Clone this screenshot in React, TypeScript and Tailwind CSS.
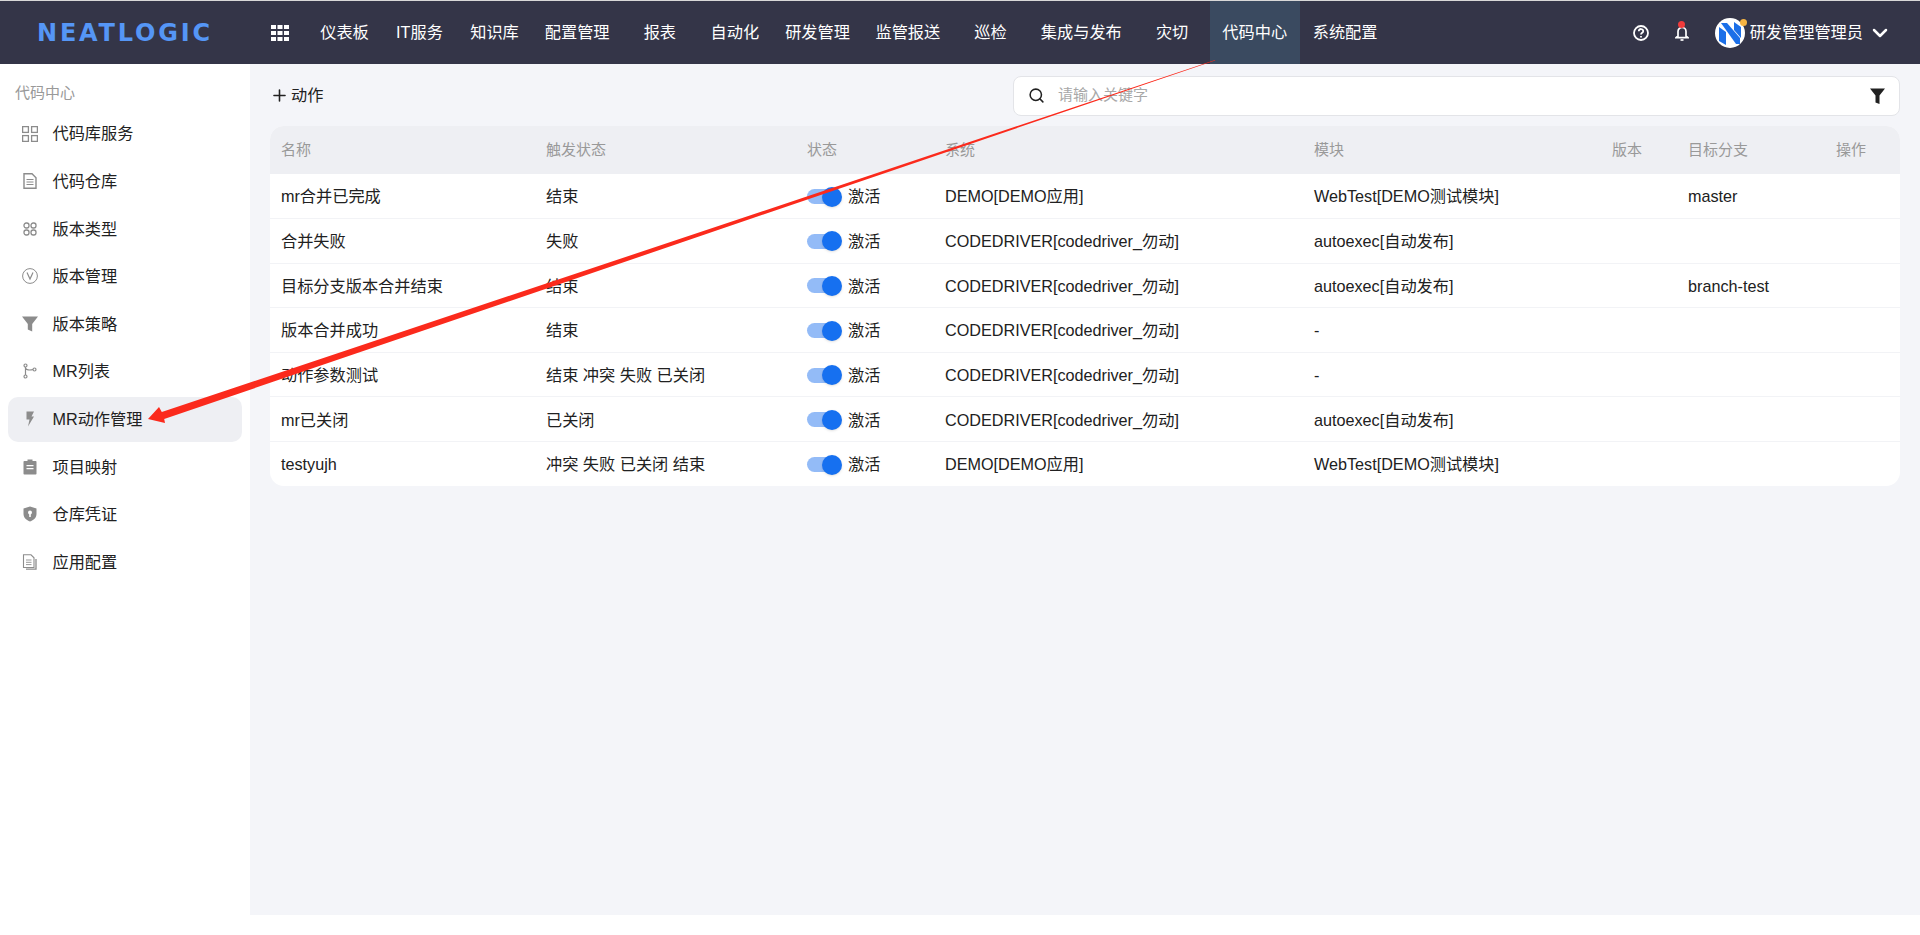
import React from 'react';
import { ChevronDown, Plus, Search } from 'lucide-react';

const navItems = ['仪表板', 'IT服务', '知识库', '配置管理', '报表', '自动化', '研发管理', '监管报送', '巡检', '集成与发布', '灾切', '代码中心', '系统配置'];

const iconProps = { width: 16, height: 16, viewBox: '0 0 16 16', className: 'shrink-0 text-[#8c8c8c]' };

const GridIcon = () => (
  <svg {...iconProps} fill="none" stroke="currentColor" strokeWidth="1.3">
    <rect x="0.6" y="0.6" width="5.8" height="5.8" />
    <rect x="9.6" y="0.6" width="5.8" height="5.8" />
    <rect x="0.6" y="9.6" width="5.8" height="5.8" />
    <rect x="9.6" y="9.6" width="5.8" height="5.8" />
  </svg>
);

const DocIcon = () => (
  <svg {...iconProps} fill="none" stroke="currentColor" strokeWidth="1.4">
    <path d="M2 0.8h8l4 4V15.2H2z" />
    <path d="M4.5 6.5h7M4.5 9h7M4.5 11.5h7" strokeWidth="1" />
  </svg>
);

const BlocksIcon = () => (
  <svg {...iconProps} fill="none" stroke="currentColor" strokeWidth="1.3">
    <rect x="2" y="2" width="5" height="5" rx="2.2" />
    <rect x="9" y="2" width="5" height="5" rx="2.2" />
    <rect x="2" y="9" width="5" height="5" rx="2.2" />
    <rect x="9" y="9" width="5" height="5" rx="2.2" />
  </svg>
);

const VersionIcon = () => (
  <svg {...iconProps} fill="none" stroke="currentColor" strokeWidth="1">
    <circle cx="8" cy="8" r="7.4" />
    <path d="M5 4.5l3 6.5 3-6.5" strokeWidth="1.2" />
  </svg>
);

const FunnelIcon = () => (
  <svg {...iconProps} fill="currentColor">
    <path d="M0 0.5h16L10.2 8v7.5l-4.4-2V8z" />
  </svg>
);

const MergeIcon = () => (
  <svg {...iconProps} fill="none" stroke="currentColor" strokeWidth="1.2">
    <circle cx="3.5" cy="2.5" r="1.5" />
    <circle cx="3.5" cy="13.5" r="1.5" />
    <circle cx="12.5" cy="6.5" r="1.5" />
    <path d="M3.5 4v8M3.5 5c.5 2 4 2.5 7.5 1.5" />
  </svg>
);

const BoltIcon = () => (
  <svg {...iconProps} fill="currentColor">
    <path d="M4.5 0.5h7.5L9.5 5.5h2.5L6 15.5l1.5-7H4.5z" />
  </svg>
);

const ClipboardIcon = () => (
  <svg {...iconProps} fill="currentColor">
    <path d="M5.5 0.5h5V2h3.2c.5 0 .8.3.8.8v12c0 .5-.3.7-.8.7H2.3c-.5 0-.8-.2-.8-.7v-12c0-.5.3-.8.8-.8h3.2z" />
    <path d="M4.5 6h7v1.3h-7zM4.5 9h7v1.3h-7z" fill="#fff" />
  </svg>
);

const ShieldIcon = () => (
  <svg {...iconProps} fill="currentColor">
    <path d="M8 0.5l6.5 2v5.5c0 3.8-3 6.2-6.5 7.5C4.5 14.2 1.5 11.8 1.5 8V2.5z" />
    <circle cx="8" cy="6.5" r="2" fill="#fff" />
    <path d="M7.2 7.5h1.6V11H7.2z" fill="#fff" />
  </svg>
);

const FilesIcon = () => (
  <svg {...iconProps} fill="none" stroke="currentColor" strokeWidth="1.1">
    <path d="M1.5 0.8h7.5l3 3v9.7H1.5z" />
    <path d="M4 6h5.5M4 8.3h5.5M4 10.6h5.5" strokeWidth="0.9" />
    <path d="M14 5v10.2H4" strokeWidth="1.3" />
  </svg>
);

const sideItems = [
  { label: '代码库服务', icon: <GridIcon /> },
  { label: '代码仓库', icon: <DocIcon /> },
  { label: '版本类型', icon: <BlocksIcon /> },
  { label: '版本管理', icon: <VersionIcon /> },
  { label: '版本策略', icon: <FunnelIcon /> },
  { label: 'MR列表', icon: <MergeIcon /> },
  { label: 'MR动作管理', icon: <BoltIcon />, active: true },
  { label: '项目映射', icon: <ClipboardIcon /> },
  { label: '仓库凭证', icon: <ShieldIcon /> },
  { label: '应用配置', icon: <FilesIcon /> },
];

const columns = [
  { label: '名称', width: 'w-[265px]' },
  { label: '触发状态', width: 'w-[261px]' },
  { label: '状态', width: 'w-[138px]' },
  { label: '系统', width: 'w-[369px]' },
  { label: '模块', width: 'w-[298px]' },
  { label: '版本', width: 'w-[76px]' },
  { label: '目标分支', width: 'w-[148px]' },
  { label: '操作', width: 'w-[75px]' },
];

const rows = [
  { name: 'mr合并已完成', trigger: '结束', system: 'DEMO[DEMO应用]', module: 'WebTest[DEMO测试模块]', branch: 'master' },
  { name: '合并失败', trigger: '失败', system: 'CODEDRIVER[codedriver_勿动]', module: 'autoexec[自动发布]', branch: '' },
  { name: '目标分支版本合并结束', trigger: '结束', system: 'CODEDRIVER[codedriver_勿动]', module: 'autoexec[自动发布]', branch: 'branch-test' },
  { name: '版本合并成功', trigger: '结束', system: 'CODEDRIVER[codedriver_勿动]', module: '-', branch: '' },
  { name: '动作参数测试', trigger: '结束 冲突 失败 已关闭', system: 'CODEDRIVER[codedriver_勿动]', module: '-', branch: '' },
  { name: 'mr已关闭', trigger: '已关闭', system: 'CODEDRIVER[codedriver_勿动]', module: 'autoexec[自动发布]', branch: '' },
  { name: 'testyujh', trigger: '冲突 失败 已关闭 结束', system: 'DEMO[DEMO应用]', module: 'WebTest[DEMO测试模块]', branch: '' },
];

const Switch = () => (
  <span className="relative inline-block h-[15px] w-[33px] rounded-full bg-[#93bbf7]">
    <span className="absolute right-[-2px] top-[-2.5px] h-[20px] w-[20px] rounded-full bg-[#1670f0] shadow-sm" />
  </span>
);

const App: React.FC = () => {
  return (
    <div className="relative flex h-screen flex-col overflow-hidden bg-white font-['Liberation_Sans','Noto_Sans_CJK_SC',sans-serif] text-[16.2px] text-[#212121]">
      <header className="flex h-[64px] shrink-0 items-center border-t border-[#d8d8d8] bg-[#343548] text-white">
        <div className="w-[271px] shrink-0 pl-[37px] font-['DejaVu_Sans',sans-serif] text-[24px] font-bold leading-none tracking-[2.8px] text-[#5596f6]">
          NEATLOGIC
        </div>
        <svg width="18" height="16" viewBox="0 0 18 16" fill="#fff" className="mr-[18px] shrink-0">
          <rect x="0" y="0" width="5" height="4" />
          <rect x="6.5" y="0" width="5" height="4" />
          <rect x="13" y="0" width="5" height="4" />
          <rect x="0" y="6" width="5" height="4" />
          <rect x="6.5" y="6" width="5" height="4" />
          <rect x="13" y="6" width="5" height="4" />
          <rect x="0" y="12" width="5" height="4" />
          <rect x="6.5" y="12" width="5" height="4" />
          <rect x="13" y="12" width="5" height="4" />
        </svg>
        <nav className="flex h-full items-stretch">
          {navItems.map(item => (
            <div
              key={item}
              className={`flex min-w-[75px] items-center justify-center px-[12.8px] ${item === '代码中心' ? 'bg-[#3a4a60]' : ''}`}
            >
              {item}
            </div>
          ))}
        </nav>
        <div className="ml-auto flex items-center pr-[28px]">
          <svg width="16" height="16" viewBox="0 0 16 16" fill="none" stroke="#fff" strokeWidth="1.8" className="mr-[26px]">
            <circle cx="8" cy="8" r="7" />
            <path d="M5.8 6.2c0-3 4.6-2.8 4.4 0 0 1.6-2.2 1.6-2.2 3.3" />
            <path d="M8 11v1.4" />
          </svg>
          <span className="relative mr-[26px] block h-[17px] w-[14px]">
            <svg width="14" height="16" viewBox="0 0 14 16" fill="none" stroke="#fff" strokeWidth="1.7" className="absolute bottom-0">
              <path d="M3 11V6.5a4 4 0 0 1 8 0V11l1.8 1.6H1.2z" />
              <path d="M5.5 15h3" />
            </svg>
            <span className="absolute left-[3.5px] top-[-3px] h-[7px] w-[7px] rounded-full bg-[#ef3b3b]" />
          </span>
          <span className="relative mr-[5px] block h-[30px] w-[30px]">
            <svg width="30" height="30" viewBox="0 0 30 30">
              <circle cx="15" cy="15" r="15" fill="#fff" />
              <path d="M4 9l7 5v13l-7-4z" fill="#1b6fe8" />
              <path d="M6 5h6l13 15v6h-4z" fill="#1b6fe8" />
              <path d="M19 4l7 5v11l-7-8z" fill="#1b6fe8" />
            </svg>
            <span className="absolute right-[-2px] top-[1px] h-[7px] w-[7px] rounded-full bg-[#f5b342]" />
          </span>
          <span>研发管理管理员</span>
          <ChevronDown size={24} strokeWidth={2.5} className="ml-[5px]" />
        </div>
      </header>

      <div className="flex h-[851px] shrink-0">
        <aside className="w-[250px] shrink-0 bg-white">
          <div className="pl-[15px] pt-[18px] text-[15px] leading-[22px] text-[#999999]">代码中心</div>
          <div className="mt-[7px] flex flex-col gap-[2.6px] px-[8px]">
            {sideItems.map(item => (
              <div
                key={item.label}
                className={`flex h-[45px] items-center gap-[14.5px] rounded-[10px] pl-[14px] ${item.active ? 'bg-[#eeeff3]' : ''}`}
              >
                {item.icon}
                {item.label}
              </div>
            ))}
          </div>
        </aside>

        <main className="flex-1 bg-[#f4f5f9] px-[20px]">
          <div className="flex h-[62px] items-center pt-[1px]">
            <div className="flex items-center gap-[2px]">
              <Plus size={19} strokeWidth={2} className="text-[#212121]" />
              动作
            </div>
            <div className="ml-auto flex h-[40px] w-[887px] items-center rounded-[8px] border border-[#e3e4e8] bg-white pl-[14px] pr-[14px] text-[15px] text-[#a8a8a8]">
              <Search size={17} strokeWidth={2.2} className="text-[#212121]" />
              <span className="ml-[13px]">请输入关键字</span>
              <svg width="15" height="16" viewBox="0 0 15 16" fill="#212121" className="ml-auto">
                <path d="M0 0.5h15L9.5 7.5V16l-4-1.5V7.5z" />
              </svg>
            </div>
          </div>

          <div className="overflow-hidden rounded-[14px] bg-white">
            <table className="w-full table-fixed">
              <colgroup>
                {columns.map(col => (
                  <col key={col.label} className={col.width} />
                ))}
              </colgroup>
              <thead>
                <tr className="h-[48px] bg-[#eeeff3] text-left text-[15px] text-[#999999]">
                  {columns.map(col => (
                    <th key={col.label} className="pl-[11px] font-normal">
                      {col.label}
                    </th>
                  ))}
                </tr>
              </thead>
              <tbody>
                {rows.map((row, i) => (
                  <tr key={row.name} className={`h-[44.6px] ${i < rows.length - 1 ? 'border-b border-[#f2f3f6]' : ''}`}>
                    <td className="pl-[11px] pt-[1px]">{row.name}</td>
                    <td className="pl-[11px] pt-[1px]">{row.trigger}</td>
                    <td className="pl-[11px] pt-[1px]">
                      <div className="flex items-center gap-[8px]">
                        <Switch />
                        激活
                      </div>
                    </td>
                    <td className="pl-[11px] pt-[1px]">{row.system}</td>
                    <td className="pl-[11px] pt-[1px]">{row.module}</td>
                    <td className="pl-[11px] pt-[1px]" />
                    <td className="pl-[11px] pt-[1px]">{row.branch}</td>
                    <td className="pl-[11px] pt-[1px]" />
                  </tr>
                ))}
              </tbody>
            </table>
          </div>
        </main>
      </div>

      {/* red annotation arrow drawn over the page */}
      <svg className="pointer-events-none absolute left-0 top-0" width="1920" height="935" viewBox="0 0 1920 935">
        <polygon
          points="148,419 159,407 161.8,412 1215,60 1215.2,60.4 164.2,419 165,423"
          fill="#fb2a1c"
        />
      </svg>
    </div>
  );
};

export default App;
